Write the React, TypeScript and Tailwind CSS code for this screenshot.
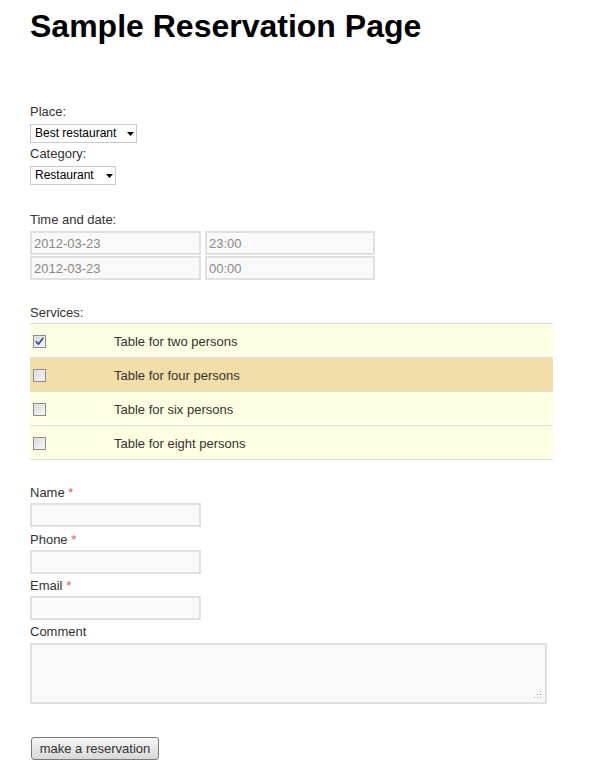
import React from "react";

function Select({ label, width }: { label: string; width: string }) {
  return (
    <div
      className={`mt-[3px] flex h-[19px] items-center justify-between border border-[#c9c9c9] bg-white pl-[4px] pr-[2px] text-[12px] text-black ${width}`}
    >
      <span className="leading-[17px]">{label}</span>
      <svg width="7" height="4" viewBox="0 0 7 4">
        <path d="M0 0 H7 L3.5 4 Z" fill="#000" />
      </svg>
    </div>
  );
}

function TextInput({ value, w = "w-[171px]" }: { value?: string; w?: string }) {
  return (
    <input
      readOnly
      value={value ?? ""}
      className={`box-border h-[24px] border-2 border-[#e0e0e0] bg-[#f9f9f9] px-[2px] text-[13px] text-[#888] outline-none ${w}`}
    />
  );
}

function Checkbox({ checked, id }: { checked: boolean; id: string }) {
  return (
    <svg width="13" height="13" viewBox="0 0 13 13" className="block">
      <defs>
        <linearGradient id={id} x1="0" y1="0" x2="1" y2="1">
          <stop offset="0" stopColor="#d4d4d4" />
          <stop offset="1" stopColor="#fbfbfb" />
        </linearGradient>
      </defs>
      <rect x="0.5" y="0.5" width="12" height="12" fill={`url(#${id})`} stroke="#8a8b8b" />
      <rect x="1.5" y="1.5" width="10" height="10" fill="none" stroke="#f0f0f0" strokeOpacity="0.6" />
      {checked && (
        <path d="M3.2 6.6 L5.4 9.2 L9.8 3.2" fill="none" stroke="#3d4f9e" strokeWidth="1.7" strokeLinecap="round" strokeLinejoin="round" />
      )}
    </svg>
  );
}

const services = [
  { label: "Table for two persons", checked: true, hl: false },
  { label: "Table for four persons", checked: false, hl: true },
  { label: "Table for six persons", checked: false, hl: false },
  { label: "Table for eight persons", checked: false, hl: false },
];

function Req({ children }: { children: React.ReactNode }) {
  return (
    <div className="leading-[18px]">
      {children} <span className="text-[#f05a4a]">*</span>
    </div>
  );
}

export default function App() {
  return (
    <div className="min-h-[771px] bg-white pl-[30px] pt-[8px] font-['Liberation_Sans',Arial,sans-serif] text-[13px] text-[#333]">
      <h1 className="text-[32px] font-bold leading-[37px] text-black">Sample Reservation Page</h1>

      <div className="mt-[58px] leading-[18px]">Place:</div>
      <Select label="Best restaurant" width="w-[107px]" />
      <div className="mt-[2px] leading-[18px]">Category:</div>
      <Select label="Restaurant" width="w-[86px]" />

      <div className="mt-[26px] leading-[18px]">Time and date:</div>
      <div className="mt-[2px] grid grid-cols-[171px_170px] gap-x-[4px] gap-y-[1px]">
        <TextInput value="2012-03-23" />
        <TextInput value="23:00" w="w-[170px]" />
        <TextInput value="2012-03-23" />
        <TextInput value="00:00" w="w-[170px]" />
      </div>

      <div className="mt-[24px] leading-[18px]">Services:</div>
      <div className="mt-[1px] w-[523px] border-b border-[#dddddd]">
        {services.map((s, i) => (
          <div
            key={s.label}
            className={`flex h-[34px] border-t border-[#dddddd] ${s.hl ? "bg-[#f2dea9]" : "bg-[#fefee2]"}`}
          >
            <div className="w-[84px] pl-[3px] pt-[11px]">
              <Checkbox checked={s.checked} id={`cbg${i}`} />
            </div>
            <div className="pt-[9px] leading-[18px]">{s.label}</div>
          </div>
        ))}
      </div>

      <div className="mt-[24px]">
        <Req>Name</Req>
      </div>
      <div className="mt-[1px]">
        <TextInput />
      </div>
      <div className="mt-[4px]">
        <Req>Phone</Req>
      </div>
      <div className="mt-[1px]">
        <TextInput />
      </div>
      <div className="mt-[3px]">
        <Req>Email</Req>
      </div>
      <div className="mt-[1px]">
        <TextInput />
      </div>
      <div className="mt-[3px] leading-[18px]">Comment</div>
      <div className="relative mt-[2px] h-[61px] w-[517px]">
        <textarea
          readOnly
          className="box-border block h-[61px] w-[517px] resize-none border-2 border-[#e0e0e0] bg-[#f9f9f9] outline-none"
        />
        <svg width="8" height="8" viewBox="0 0 8 8" className="absolute bottom-[5px] right-[5px]">
          <g fill="#a0a0a0">
            <rect x="6" y="0" width="1" height="1" />
            <rect x="3" y="3" width="1" height="1" />
            <rect x="6" y="3" width="1" height="1" />
            <rect x="0" y="6" width="1" height="1" />
            <rect x="3" y="6" width="1" height="1" />
            <rect x="6" y="6" width="1" height="1" />
          </g>
        </svg>
      </div>

      <button
        type="button"
        className="ml-[1px] mt-[33px] box-border flex h-[23px] w-[128px] items-center justify-center rounded-[3px] border border-[#7a7a7a] bg-gradient-to-b from-[#f6f6f6] to-[#d8d8d8] text-[13px] text-[#333]"
      >
        make a reservation
      </button>
    </div>
  );
}
